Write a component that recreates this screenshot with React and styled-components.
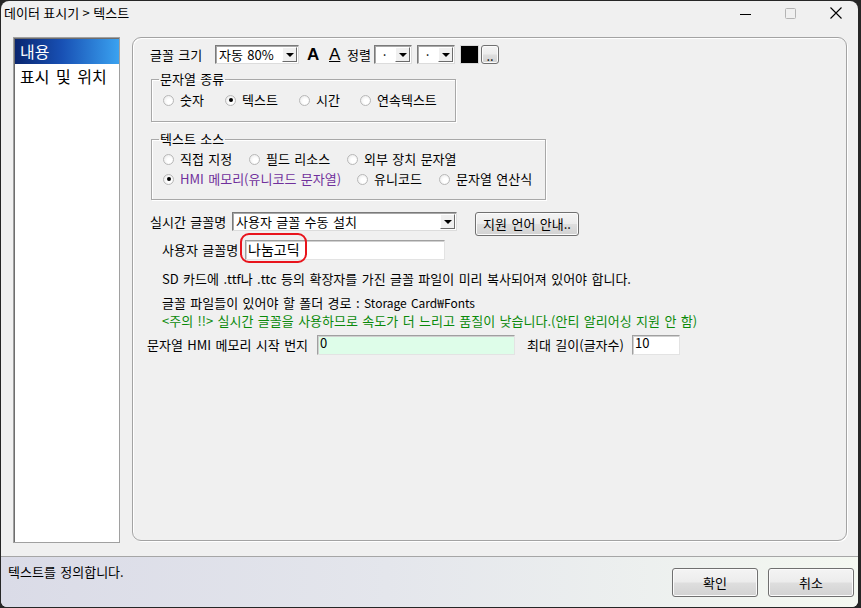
import React from "react";
import styled, { createGlobalStyle } from "styled-components";

const GlobalStyle = createGlobalStyle`
  html, body {
    margin: 0;
    padding: 0;
    background: #262626;
  }
  body {
    font-family: "Noto Sans CJK KR", "Noto Sans", sans-serif;
    font-size: 13px;
    word-spacing: 1.5px;
    color: #000;
  }
  #root {
    padding: 1px 0 0 1px;
  }
`;

const Window = styled.div`
  width: 857px;
  height: 606px;
  box-sizing: border-box;
  background: #f0f0f0;
  border-radius: 8px 8px 6px 6px;
  overflow: hidden;
  display: flex;
  flex-direction: column;
`;

const TitleBar = styled.div`
  height: 28px;
  flex: none;
  display: flex;
  align-items: flex-start;
  padding-left: 3px;
`;

const Title = styled.div`
  flex: 1;
  padding-top: 3px;
  line-height: 17px;
  font-size: 13px;
  word-spacing: 0.5px;
`;

const Ctl = styled.div`
  width: 45px;
  height: 24px;
  display: flex;
  align-items: center;
  justify-content: center;
`;

const Body = styled.div`
  flex: 1;
  display: flex;
  gap: 12px;
  padding: 8px 11px 13px 12px;
  min-height: 0;
`;

const SideList = styled.div`
  width: 107px;
  box-sizing: border-box;
  background: #fff;
  border: 1px solid #a0a0a0;
  box-shadow: inset 1px 1px 0 #6e6e6e;
  padding-top: 1px;
`;

const SideItem = styled.div`
  height: 25px;
  line-height: 25px;
  font-size: 16px;
  word-spacing: 3px;
  padding-left: 5px;
  margin-left: 1px;
  color: ${(p) => (p.$active ? "#fff" : "#000")};
  background: ${(p) =>
    p.$active
      ? "linear-gradient(90deg, #0a2670 0%, #1850b4 45%, #3aa2f0 100%)"
      : "transparent"};
`;

const Panel = styled.div`
  flex: 1;
  margin-bottom: 2px;
  border: 1px solid #a3a3a3;
  border-radius: 9px;
  box-shadow: inset 1px 1px 0 #fff, 1px 1px 0 #fff;
  padding: 7px 0 0 17px;
  display: flex;
  flex-direction: column;
  align-items: flex-start;
`;

const Row = styled.div`
  display: flex;
  align-items: ${(p) => p.$align || "center"};
  margin-top: ${(p) => p.$mt || 0}px;
  margin-left: ${(p) => p.$ml || 0}px;
  height: ${(p) => (p.$h ? `${p.$h}px` : "auto")};
`;

const Label = styled.span`
  display: inline-block;
  flex: none;
  width: ${(p) => (p.$w ? `${p.$w}px` : "auto")};
  margin-left: ${(p) => p.$ml || 0}px;
  line-height: ${(p) => p.$lh || 16}px;
  white-space: nowrap;
`;

const Combo = styled.div`
  flex: none;
  width: ${(p) => p.$w}px;
  height: ${(p) => p.$h || 19}px;
  margin-left: ${(p) => p.$ml || 0}px;
  box-sizing: border-box;
  background: #fff;
  border: 1px solid;
  border-color: #7a7a7a #dcdcdc #dcdcdc #7a7a7a;
  box-shadow: inset 1px 1px 0 #a8a8a8;
  display: flex;
  align-items: stretch;
`;

const ComboValue = styled.span`
  flex: 1;
  padding: 0 0 0 ${(p) => p.$pl || 3}px;
  line-height: 17px;
  font-size: 13px;
  white-space: nowrap;
`;

const ArrowBtn = styled.span`
  width: 15px;
  flex: none;
  margin: 1px 1px 1px 0;
  box-sizing: border-box;
  background: #f0f0f0;
  border: 1px solid;
  border-color: #fff #6b6b6b #6b6b6b #fff;
  display: flex;
  align-items: center;
  justify-content: center;

  &::after {
    content: "";
    border-left: 4px solid transparent;
    border-right: 4px solid transparent;
    border-top: 4px solid #000;
  }
`;

const BigA = styled.span`
  width: 12px;
  margin-left: ${(p) => p.$ml || 0}px;
  font-family: "Liberation Sans", Arial, sans-serif;
  font-size: 17px;
  font-weight: ${(p) => (p.$bold ? 700 : 400)};
  text-decoration: ${(p) => (p.$under ? "underline" : "none")};
  text-underline-offset: 1px;
  line-height: 19px;
`;

const Swatch = styled.span`
  width: 19px;
  height: 19px;
  margin-left: ${(p) => p.$ml || 0}px;
  box-sizing: border-box;
  background: #000;
  border: 1px solid #d8d8d8;
`;

const Button = styled.div`
  flex: none;
  width: ${(p) => p.$w}px;
  height: ${(p) => p.$h}px;
  margin-left: ${(p) => p.$ml || 0}px;
  box-sizing: border-box;
  border: 1px solid #707070;
  border-radius: 3px;
  background: linear-gradient(#f4f4f4 0%, #ececec 48%, #dedede 52%, #d2d2d2 100%);
  box-shadow: inset 0 0 0 1px #fbfbfb;
  display: flex;
  align-items: ${(p) => (p.$bottom ? "flex-end" : "center")};
  justify-content: center;
  font-size: 13px;
  line-height: 14px;
  white-space: nowrap;
`;

const Group = styled.fieldset`
  width: ${(p) => p.$w}px;
  box-sizing: border-box;
  margin: ${(p) => p.$mt}px 0 0 1px;
  padding: ${(p) => p.$pt}px 0 ${(p) => p.$pb}px 11px;
  min-width: 0;
  border: 1px solid #a8a8a8;
  box-shadow: inset 1px 1px 0 #fff, 1px 1px 0 #fff;
`;

const Legend = styled.legend`
  padding: 0 1px;
  margin-left: -4px;
  line-height: 14px;
  font-size: 13px;
`;

const RadioRow = styled.div`
  display: flex;
  align-items: center;
  height: 16px;
  margin-top: ${(p) => p.$mt || 0}px;
`;

const RadioItem = styled.div`
  display: flex;
  align-items: center;
  gap: 6px;
  flex: none;
  width: ${(p) => (p.$w ? `${p.$w}px` : "auto")};
  color: ${(p) => p.$color || "#000"};
  white-space: nowrap;
  line-height: 16px;
`;

const RadioDot = styled.span`
  width: 11px;
  height: 11px;
  box-sizing: border-box;
  border-radius: 50%;
  border: 1px solid #b8b8b8;
  background: radial-gradient(circle at 60% 60%, #ffffff 30%, #e4e4e4 100%);
  display: inline-flex;
  align-items: center;
  justify-content: center;

  &::after {
    content: "";
    width: 4px;
    height: 4px;
    border-radius: 50%;
    background: ${(p) => (p.$on ? "#000" : "transparent")};
  }
`;

const Field = styled.div`
  position: relative;
  flex: none;
  width: ${(p) => p.$w}px;
  height: 20px;
  margin-left: ${(p) => p.$ml || 0}px;
  box-sizing: border-box;
  background: ${(p) => p.$bg || "#fff"};
  border: 1px solid;
  border-color: #a0a0a0 #e3e3e3 #e3e3e3 #a0a0a0;
  box-shadow: inset 1px 1px 0 #d0d0d0;
  padding: 0 2px;
  font-size: ${(p) => p.$fs || 13}px;
  line-height: ${(p) => p.$lh || 14}px;
  white-space: nowrap;
`;

const Oval = styled.span`
  position: absolute;
  left: -6px;
  top: -8px;
  width: 67px;
  height: 30px;
  box-sizing: border-box;
  border: 2px solid #e8141c;
  border-radius: 9px;
`;

const Info = styled.div`
  margin-top: ${(p) => p.$mt}px;
  padding-left: 12px;
  line-height: 16px;
  color: ${(p) => p.$color || "#000"};
  white-space: nowrap;
`;

const Latin = styled.span`
  font-size: 12px;
`;

const Footer = styled.div`
  flex: none;
  height: 51px;
  box-sizing: border-box;
  border-top: 1px solid #a6a6a6;
  background: linear-gradient(90deg, #dadbe7 0%, #e4e6ec 45%, #f4f8f1 100%);
  display: flex;
  justify-content: space-between;
  padding: 7px 4px 0 7px;
`;

const FooterText = styled.div`
  line-height: 16px;
`;

const FooterButtons = styled.div`
  display: flex;
  gap: 10px;
  padding-top: 4px;
`;

function Radio({ on, children, w, color }) {
  return (
    <RadioItem $w={w} $color={color}>
      <RadioDot $on={on} />
      <span>{children}</span>
    </RadioItem>
  );
}

export default function App() {
  return (
    <>
      <GlobalStyle />
      <Window>
        <TitleBar>
          <Title>데이터 표시기 &gt; 텍스트</Title>
          <Ctl>
            <svg width="11" height="11" viewBox="0 0 11 11">
              <line x1="0" y1="6.5" x2="11" y2="6.5" stroke="#000" strokeWidth="1" />
            </svg>
          </Ctl>
          <Ctl>
            <svg width="11" height="11" viewBox="0 0 11 11">
              <rect x="0.5" y="0.5" width="10" height="10" rx="1" fill="none" stroke="#b4b4b4" />
            </svg>
          </Ctl>
          <Ctl>
            <svg width="12" height="12" viewBox="0 0 12 12">
              <path d="M0.5 0.5 L11.5 11.5 M11.5 0.5 L0.5 11.5" stroke="#000" strokeWidth="1.1" />
            </svg>
          </Ctl>
        </TitleBar>

        <Body>
          <SideList>
            <SideItem $active>내용</SideItem>
            <SideItem>표시 및 위치</SideItem>
          </SideList>

          <Panel>
            <Row $h={19}>
              <Label $w={65}>글꼴 크기</Label>
              <Combo $w={84}>
                <ComboValue>자동 80%</ComboValue>
                <ArrowBtn />
              </Combo>
              <BigA $ml={8} $bold>A</BigA>
              <BigA $ml={10} $under>A</BigA>
              <Label $w={27} $ml={6}>정렬</Label>
              <Combo $w={38}>
                <ComboValue $pl={6}>·</ComboValue>
                <ArrowBtn />
              </Combo>
              <Combo $w={38} $ml={5}>
                <ComboValue $pl={6}>·</ComboValue>
                <ArrowBtn />
              </Combo>
              <Swatch $ml={5} />
              <Button $w={18} $h={19} $ml={2} $bottom>..</Button>
            </Row>

            <Group $w={305} $mt={8} $pt={6} $pb={13}>
              <Legend>문자열 종류</Legend>
              <RadioRow>
                <Radio w={62}>숫자</Radio>
                <Radio w={74} on>텍스트</Radio>
                <Radio w={61}>시간</Radio>
                <Radio>연속텍스트</Radio>
              </RadioRow>
            </Group>

            <Group $w={395} $mt={10} $pt={5} $pb={12}>
              <Legend>텍스트 소스</Legend>
              <RadioRow>
                <Radio w={86}>직접 지정</Radio>
                <Radio w={98}>필드 리소스</Radio>
                <Radio>외부 장치 문자열</Radio>
              </RadioRow>
              <RadioRow $mt={4}>
                <Radio w={194} on color="#70309c">HMI 메모리(유니코드 문자열)</Radio>
                <Radio w={82}>유니코드</Radio>
                <Radio>문자열 연산식</Radio>
              </RadioRow>
            </Group>

            <Row $mt={12} $align="flex-start">
              <Label $w={82} $lh={19}>실시간 글꼴명</Label>
              <Combo $w={225}>
                <ComboValue>사용자 글꼴 수동 설치</ComboValue>
                <ArrowBtn />
              </Combo>
              <Button $w={104} $h={24} $ml={18}>지원 언어 안내..</Button>
            </Row>

            <Row $mt={4} $ml={12}>
              <Label $w={83} $lh={20}>사용자 글꼴명</Label>
              <Field $w={200} $fs={14} $lh={17}>
                나눔고딕
                <Oval />
              </Field>
            </Row>

            <Info $mt={11}>
              SD 카드에 .ttf나 .ttc 등의 확장자를 가진 글꼴 파일이 미리 복사되어져 있어야 합니다.
            </Info>
            <Info $mt={8}>
              글꼴 파일들이 있어야 할 폴더 경로 : <Latin>Storage Card₩Fonts</Latin>
            </Info>
            <Info $mt={2} $color="#0a8a0a">
              &lt;주의 !!&gt; 실시간 글꼴을 사용하므로 속도가 더 느리고 품질이 낮습니다.(안티 알리어싱 지원 안 함)
            </Info>

            <Row $mt={6} $ml={-3}>
              <Label $w={170} $lh={20}>문자열 HMI 메모리 시작 번지</Label>
              <Field $w={198} $bg="#defde9">0</Field>
              <Label $w={105} $ml={12} $lh={20}>최대 길이(글자수)</Label>
              <Field $w={48}>10</Field>
            </Row>
          </Panel>
        </Body>

        <Footer>
          <FooterText>텍스트를 정의합니다.</FooterText>
          <FooterButtons>
            <Button $w={86} $h={29}>확인</Button>
            <Button $w={86} $h={29}>취소</Button>
          </FooterButtons>
        </Footer>
      </Window>
    </>
  );
}
